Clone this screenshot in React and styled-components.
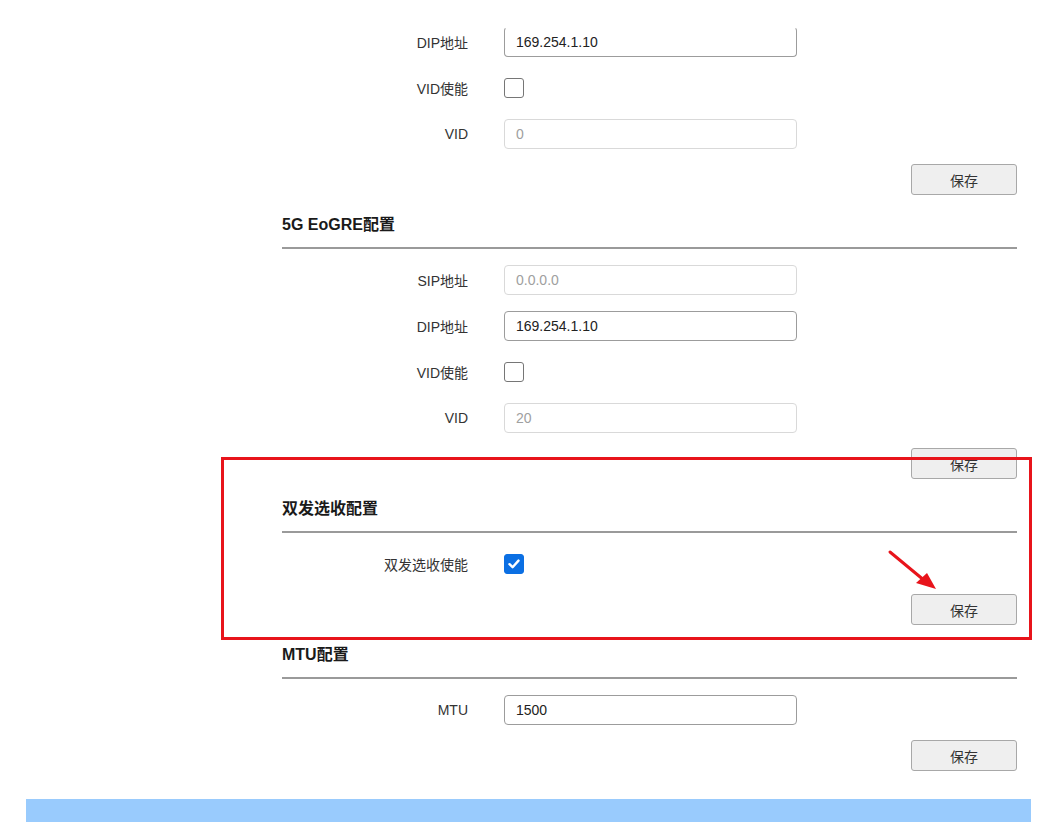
import React from 'react'
import styled, { createGlobalStyle } from 'styled-components'

const Global = createGlobalStyle`
  html, body { margin: 0; padding: 0; background: #fff; }
  body { font-family: "Liberation Sans", Arial, "Noto Sans CJK SC", sans-serif; color: #333; }
`

const Page = styled.div`
  position: relative;
  width: 1053px;
  height: 823px;
  overflow: hidden;
  padding-top: 19px;
  box-sizing: border-box;
`

const Column = styled.div`
  margin-left: 282px;
  width: 735px;
`

const Section = styled.section`
  display: flex;
  flex-direction: column;
`

const Title = styled.h3`
  margin: 0;
  padding: 19px 0 11px;
  font-size: 16px;
  line-height: 22px;
  font-weight: bold;
  color: #1a1a1a;
`

const Divider = styled.div`
  border-top: 2px solid #9a9a9a;
  margin-bottom: 8px;
`

const Row = styled.div`
  display: flex;
  align-items: center;
  height: 46px;
`

const Label = styled.label`
  width: 186px;
  text-align: right;
  font-size: 14px;
  color: #333;
  margin-right: 36px;
`

const Input = styled.input`
  width: 293px;
  height: 30px;
  box-sizing: border-box;
  padding: 0 11px;
  font-size: 14px;
  font-family: "Liberation Sans", Arial, sans-serif;
  border: 1px solid ${p => (p.disabled ? '#d9d9d9' : '#9c9c9c')};
  border-top-color: ${p => (p.$cut ? 'transparent' : p.disabled ? '#d9d9d9' : '#9c9c9c')};
  border-radius: 4px;
  background: #fff;
  color: ${p => (p.disabled ? '#a0a0a0' : '#222')};
  outline: none;
`

const Box = styled.span`
  display: inline-flex;
  align-items: center;
  justify-content: center;
  width: 20px;
  height: 20px;
  box-sizing: border-box;
  border-radius: 3px;
  border: 1px solid ${p => (p.$checked ? '#0b6fe3' : '#767676')};
  background: ${p => (p.$checked ? '#0b6fe3' : '#fff')};
`

const ButtonRow = styled.div`
  display: flex;
  justify-content: flex-end;
  margin-top: 7px;
`

const SaveButton = styled.button`
  width: 106px;
  height: 31px;
  box-sizing: border-box;
  border: 1px solid #a8a8a8;
  border-radius: 3px;
  background: #efefef;
  font-size: 14px;
  color: #333;
  font-family: "Liberation Sans", Arial, "Noto Sans CJK SC", sans-serif;
`

const BlueBar = styled.div`
  height: 23px;
  margin: 28px 22px 0 26px;
  background: #99cbfd;
`

const Highlight = styled.div`
  position: absolute;
  left: 221px;
  top: 457px;
  width: 811px;
  height: 183px;
  box-sizing: border-box;
  border: 3px solid #e8141b;
  pointer-events: none;
`

const Arrow = styled.svg`
  position: absolute;
  left: 885px;
  top: 546px;
`

function Checkbox({ checked }) {
  return (
    <Box $checked={checked}>
      {checked && (
        <svg width="14" height="14" viewBox="0 0 14 14">
          <path d="M2.5 7.2 L5.6 10.2 L11.5 3.6" fill="none" stroke="#fff" strokeWidth="2.4" strokeLinecap="round" strokeLinejoin="round" />
        </svg>
      )}
    </Box>
  )
}

function Field({ label, children }) {
  return (
    <Row>
      <Label>{label}</Label>
      {children}
    </Row>
  )
}

function Save() {
  return (
    <ButtonRow>
      <SaveButton>保存</SaveButton>
    </ButtonRow>
  )
}

export default function App() {
  return (
    <>
      <Global />
      <Page>
        <Column>
          <Section>
            <Field label="DIP地址"><Input $cut defaultValue="169.254.1.10" /></Field>
            <Field label="VID使能"><Checkbox /></Field>
            <Field label="VID"><Input disabled defaultValue="0" /></Field>
            <Save />
          </Section>

          <Section>
            <Title>5G EoGRE配置</Title>
            <Divider />
            <Field label="SIP地址"><Input disabled defaultValue="0.0.0.0" /></Field>
            <Field label="DIP地址"><Input defaultValue="169.254.1.10" /></Field>
            <Field label="VID使能"><Checkbox /></Field>
            <Field label="VID"><Input disabled defaultValue="20" /></Field>
            <Save />
          </Section>

          <Section>
            <Title>双发选收配置</Title>
            <Divider />
            <Field label="双发选收使能"><Checkbox checked /></Field>
            <Save />
          </Section>

          <Section>
            <Title>MTU配置</Title>
            <Divider />
            <Field label="MTU"><Input defaultValue="1500" /></Field>
            <Save />
          </Section>
        </Column>
        <BlueBar />

        <Highlight />
        <Arrow width="56" height="50" viewBox="0 0 56 50">
          <line x1="5" y1="6" x2="40" y2="35" stroke="#e8141b" strokeWidth="3" strokeLinecap="round" />
          <polygon points="51,43 31,37 42,27" fill="#e8141b" />
        </Arrow>
      </Page>
    </>
  )
}
